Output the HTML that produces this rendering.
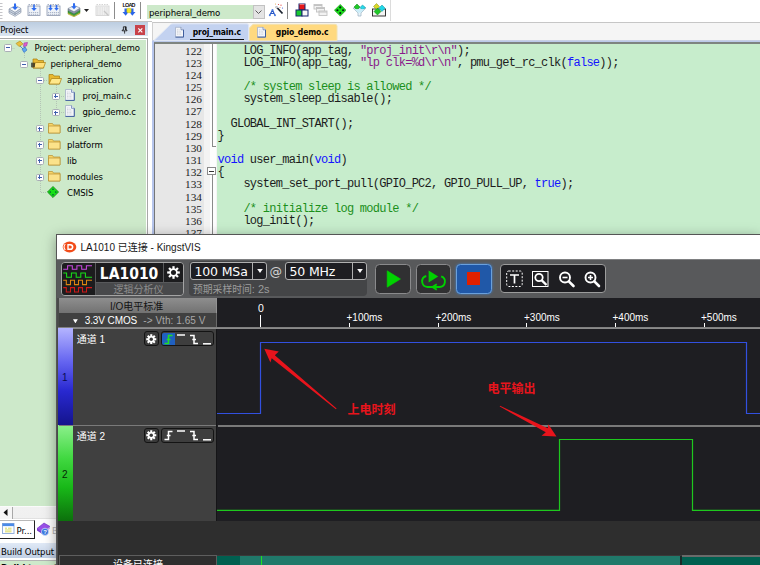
<!DOCTYPE html>
<html lang="zh">
<head>
<meta charset="utf-8">
<title>LA1010 - KingstVIS</title>
<style>
*{box-sizing:border-box;margin:0;padding:0}
html,body{width:760px;height:565px;overflow:hidden;background:#fff}
body{position:relative;font-family:"Liberation Sans","Noto Sans CJK SC",sans-serif;font-size:11px;color:#000}
.a{position:absolute}
.t{position:absolute;white-space:nowrap;line-height:1}
/* ---------- Keil ---------- */
#ktb{left:0;top:0;width:760px;height:22px;background:#fff}
#ktbline{left:0;top:21.200px;width:152px;height:.9px;background:#c2c2c2}
.sep{position:absolute;top:2px;width:1px;height:17px;background:#8c8c8c}
#phead{left:0;top:22px;width:147.700px;height:14.200px;background:linear-gradient(#bccde0,#dbe5f1)}
#tree{left:0;top:39.800px;width:145.800px;height:466px;background:#cde9ca}
.tr{position:absolute;white-space:nowrap;line-height:16px;height:16px;font-size:9.5px;letter-spacing:-.07px;color:#000;font-family:"DejaVu Sans Condensed","Liberation Sans",sans-serif}
.kt{font-family:"DejaVu Sans Condensed","Liberation Sans",sans-serif;font-size:9.5px;letter-spacing:-.07px}
.exp{position:absolute;width:7.8px;height:7.4px;border:1px solid #a9aeb6;background:#fdfdfd;border-radius:1.6px}
.exp:before{content:"";position:absolute;left:.9px;top:2.2px;width:4px;height:1px;background:#3f5fae}
.exp.p:after{content:"";position:absolute;left:2.4px;top:.7px;width:1px;height:4px;background:#3f5fae}
#edframe{left:151.700px;top:22px;width:609px;height:220px;background:#f5f5f5;border-left:1px solid #d0d0d0;border-top:1px solid #c6c6c6;margin-top:-.3px}
.tb{font-family:"DejaVu Sans Condensed","Liberation Sans",sans-serif;font-size:8.5px;letter-spacing:-.13px;font-weight:bold}
/* code */
.ln{position:absolute;left:155px;width:47px;text-align:right;font-family:"Liberation Serif",serif;font-size:11.300px;letter-spacing:0;line-height:12px;color:#222;white-space:pre}
.cd{position:absolute;left:217.5px;font-family:"Liberation Mono",monospace;font-size:12px;letter-spacing:-0.73px;line-height:12px;color:#1c1c1c;white-space:pre}
.k{color:#1414ff}.s{color:#8a1a8a}.c{color:#1b8f1b}
/* ---------- KingstVIS ---------- */
#kv{left:56px;top:234px;width:704px;height:331px;background:#2e2e2e;overflow:hidden;box-shadow:0 3px 12px rgba(0,0,0,.36);font-family:"Liberation Sans","Noto Sans CJK SC",sans-serif}
#kv .t{color:#fff}
.rl{font-size:10px;font-family:'Liberation Sans',sans-serif}
.tk{top:323px;width:1px;height:5px;background:#fff}
</style>
</head>
<body>
<!-- ================= Keil top toolbar ================= -->
<div class="a" id="ktb"></div>
<div class="a" id="ktbline"></div>
<div class="a" style="left:390px;top:0;width:1px;height:21px;background:#dcdcdc"></div>
<div class="sep" style="left:114px"></div>
<div class="sep" style="left:140px"></div>
<div class="sep" style="left:287px"></div>
<!-- toolbar grip -->
<svg class="a" style="left:0;top:2px" width="3" height="18" viewBox="0 0 3 18"><path d="M0 1.500H2.500M0 4.500H2.500M0 7.500H2.500M0 10.500H2.500M0 13.500H2.500M0 16.500H2.500" stroke="#c4c4c8" stroke-width="1"/></svg>
<!-- translate -->
<svg class="a" style="left:8px;top:3px" width="14" height="14" viewBox="0 0 14 14">
  <path d="M1 8 L7 11.500 L13 7.500 V9.500 L7 13.300 L1 10Z" fill="#dfe5ee" stroke="#8793a8" stroke-width=".7"/>
  <path d="M1 6 L7.500 2.500 L13 5.500 L7 9.500Z" fill="#f4f7fb" stroke="#8793a8" stroke-width=".7"/>
  <path d="M1 6 V8 L7 11.500 V9.500Z M7 9.500 V11.500 L13 7.500 V5.500Z" fill="#c9d2e0" stroke="#8793a8" stroke-width=".6"/>
  <path d="M6 0.500 H8 V4 H10 L7 7 L4 4 H6Z" fill="#2f6cf0"/>
</svg>
<!-- build -->
<svg class="a" style="left:27px;top:3px" width="14" height="14" viewBox="0 0 14 14">
  <rect x="1" y="3" width="12" height="9.500" fill="#eef2f8" stroke="#8a96ac" stroke-width=".8"/>
  <path d="M1.500 1.500 H12.500" stroke="#a8b2c4" stroke-width="1" stroke-dasharray="1.500 1"/>
  <path d="M2 9.500 H12 M2 11.300 H12" stroke="#9aa6bc" stroke-width=".8" stroke-dasharray="1.200 .8"/>
  <path d="M6.200 1.500 H7.800 V5 H9.800 L7 8 L4.200 5 H6.200Z" fill="#2f6cf0"/>
</svg>
<!-- rebuild -->
<svg class="a" style="left:46px;top:3px" width="15" height="14" viewBox="0 0 15 14">
  <rect x="1" y="3" width="13" height="9.500" fill="#eef2f8" stroke="#8a96ac" stroke-width=".8"/>
  <path d="M1.500 1.500 H13.500" stroke="#a8b2c4" stroke-width="1" stroke-dasharray="1.500 1"/>
  <path d="M2 9.500 H13 M2 11.300 H13" stroke="#9aa6bc" stroke-width=".8" stroke-dasharray="1.200 .8"/>
  <path d="M3.700 2 H5.300 V5 H6.800 L4.500 7.800 L2.200 5 H3.700Z" fill="#2f6cf0"/>
  <path d="M9.700 2 H11.300 V5 H12.800 L10.500 7.800 L8.200 5 H9.700Z" fill="#2f6cf0"/>
</svg>
<!-- batch build -->
<svg class="a" style="left:67px;top:3px" width="14" height="14" viewBox="0 0 14 14">
  <path d="M1 9.500 L7 12.800 L13 9 V10.500 L7 13.800 L1 11Z" fill="#d8d838" stroke="#8a8a20" stroke-width=".5"/>
  <path d="M1 7.500 L7 10.800 L13 7 V9 L7 12.500 L1 9.500Z" fill="#3ca83c" stroke="#1a6a1a" stroke-width=".5"/>
  <path d="M1 5.500 L7 8.800 L13 5 V7 L7 10.800 L1 7.500Z" fill="#8c98a8" stroke="#566072" stroke-width=".5"/>
  <path d="M1 5.500 L7.500 2.500 L13 5 L7 8.800Z" fill="#f0f3f8" stroke="#7c889c" stroke-width=".6"/>
  <path d="M6 0.300 H8 V3.300 H9.800 L7 6.200 L4.200 3.300 H6Z" fill="#2f6cf0"/>
</svg>
<svg class="a" style="left:84px;top:8.500px" width="5" height="3" viewBox="0 0 5 3"><path d="M0 0 H5 L2.500 3Z" fill="#222"/></svg>
<!-- disabled -->
<svg class="a" style="left:95px;top:3px" width="15" height="14" viewBox="0 0 15 14" opacity=".75">
  <rect x="1" y="3" width="13" height="9.500" fill="#f0f0f0" stroke="#c0c0c0" stroke-width=".8"/>
  <path d="M1.500 1.500 H13.500" stroke="#c8c8c8" stroke-width="1" stroke-dasharray="1.500 1"/>
  <path d="M2 5 H13 M2 7 H13 M2 9 H13 M2 11 H13" stroke="#c4c4c4" stroke-width=".9" stroke-dasharray="1.500 .8"/>
  <path d="M9 8 L13.500 12.500" stroke="#b4b4b4" stroke-width="1.200"/>
</svg>
<!-- LOAD -->
<svg class="a" style="left:121px;top:2px" width="16" height="16" viewBox="0 0 16 16">
  <text x="8" y="5.300" font-family="Liberation Sans, sans-serif" font-size="5.400" font-weight="bold" text-anchor="middle" fill="#111" textLength="13">LOAD</text>
  <path d="M3.500 6.500 H6 V10 H7.500 L4.700 13.800 L1.500 10 H3.500Z" fill="#2a64e8"/>
  <path d="M10 6.500 H12.500 V10 H14.500 L11.300 13.800 L8.500 10 H10Z" fill="#2a64e8"/>
  <rect x="5.800" y="6.300" width="4.400" height="4.400" rx="1.200" fill="#f0e828" stroke="#b8b010" stroke-width=".4"/>
</svg>
<!-- wand -->
<svg class="a" style="left:268px;top:3px" width="16" height="14" viewBox="0 0 16 14">
  <path d="M8 3.500 L14.500 10.500" stroke="#1c2430" stroke-width="1.800"/>
  <path d="M8 3.500 L9.500 5" stroke="#e8e8f0" stroke-width="1.400"/>
  <path d="M4.500 7 L1.500 12.500 M4.500 7 L7 12.500 M2.500 10.500 H6.500" stroke="#2858c8" stroke-width="1.100" fill="none"/>
  <circle cx="1.800" cy="12.300" r="1" fill="#5080e0"/><circle cx="7" cy="12.300" r="1" fill="#5080e0"/><circle cx="4.500" cy="7" r="1" fill="#5080e0"/>
  <circle cx="10.500" cy="1.500" r=".6" fill="#e04040"/><circle cx="13" cy="2.200" r=".6" fill="#e04040"/><circle cx="12" cy="4.500" r=".5" fill="#e08040"/><circle cx="14.500" cy="5" r=".6" fill="#4060e0"/><circle cx="7.500" cy="1" r=".5" fill="#e0a040"/>
</svg>
<!-- blocks -->
<svg class="a" style="left:295px;top:3px" width="14" height="14" viewBox="0 0 14 14">
  <rect x="4" y="1" width="6" height="6" fill="#e81818" stroke="#16246e" stroke-width="1"/>
  <rect x="1" y="7" width="6" height="6" fill="#18c830" stroke="#16246e" stroke-width="1"/>
  <rect x="7" y="7" width="6" height="6" fill="#f8f8f8" stroke="#16246e" stroke-width="1"/>
  <path d="M4.500 1.500 H9.500" stroke="#f88" stroke-width=".8"/>
</svg>
<!-- disabled windows -->
<svg class="a" style="left:313px;top:3px" width="15" height="14" viewBox="0 0 15 14" fill="#f2f2f2" stroke="#c2c2c2" stroke-width=".9">
  <rect x="1" y="1.500" width="8" height="4.500"/><rect x="3.500" y="4.500" width="8" height="4.500"/><rect x="6" y="8" width="8" height="4.500"/>
  <path d="M1 2.500 H9 M3.500 5.500 H11.500 M6 9 H14" stroke-width="1.200"/>
</svg>
<!-- green diamond -->
<svg class="a" style="left:333.500px;top:4px" width="12.500" height="12.500" viewBox="0 0 14 14"><path d="M7 0.500 L13.500 7 L7 13.500 L0.500 7Z" fill="#18e018" stroke="#0a8a0a" stroke-width=".7"/><circle cx="7" cy="3.800" r="1.250" fill="#021"/><circle cx="7" cy="10.200" r="1.250" fill="#021"/><circle cx="3.800" cy="7" r="1.250" fill="#021"/><circle cx="10.200" cy="7" r="1.250" fill="#021"/></svg>
<!-- funnel -->
<svg class="a" style="left:352px;top:3px" width="15" height="14" viewBox="0 0 15 14">
  <path d="M1 5 H14 L9 10 V13 H6 V10Z" fill="#e8f4fa" stroke="#9ab0c0" stroke-width=".7"/>
  <path d="M5 1 L8 4 L5 7 L2 4Z" fill="#20c828" stroke="#0a7a10" stroke-width=".5"/>
  <path d="M10.500 2 L13.500 4.500 L10.500 7 L8 4.500Z" fill="#28d8e8" stroke="#0a8a9a" stroke-width=".5"/>
  <path d="M2.500 6 H12.500 L8.800 9.800 H6.200Z" fill="#c8ecf8" opacity=".9"/>
</svg>
<!-- pack box -->
<svg class="a" style="left:371px;top:3px" width="16" height="14" viewBox="0 0 16 14">
  <rect x="1.500" y="6" width="13" height="7" fill="#f4f4f4" stroke="#222" stroke-width=".9"/>
  <path d="M5.500 0.500 L8.500 3.500 L5.500 6.500 L2.500 3.500Z" fill="#d8d828" stroke="#8a8a10" stroke-width=".5"/>
  <path d="M11 2 L14.200 5.200 L11 8.400 L7.800 5.200Z" fill="#20d8e8" stroke="#0a8a9a" stroke-width=".5"/>
  <path d="M6.500 5 L10 8.500 L6.500 12 L3 8.500Z" fill="#20c828" stroke="#0a7a10" stroke-width=".5"/>
</svg>

<!-- target combo -->
<div class="a" style="left:147px;top:5px;width:106px;height:14px;background:#cde9ca"></div>
<div class="t kt" style="left:149px;top:8.0px">peripheral_demo</div>
<div class="a" style="left:252.5px;top:5px;width:12px;height:14px;background:#e4e4e4;border:1px solid #c2c2c2"></div>
<svg class="a" style="left:254px;top:8px" width="9" height="8" viewBox="0 0 9 8"><path d="M1.5 2.5 L4.5 5.5 L7.5 2.5" fill="none" stroke="#5a5a5a" stroke-width="1"/></svg>

<!-- ================= Project panel ================= -->
<div class="a" id="phead"></div>
<div class="t kt" style="left:.3px;top:24.700px;letter-spacing:-.2px">Project</div>
<div class="a" style="left:135px;top:25px;width:10px;height:10px;background:#c8424a"></div>
<svg class="a" style="left:134.500px;top:24.500px" width="11" height="11" viewBox="0 0 11 11"><path d="M3.300 3.300 L7.300 7.300 M7.300 3.300 L3.300 7.300" stroke="#fff" stroke-width="1.150"/></svg>
<svg class="a" style="left:120.800px;top:26px" width="7.200" height="8" viewBox="0 0 9 10"><path d="M3 1 H6.5 V5 H7.5 V6 H1.5 V5 H3 Z M4.5 6 V9.5" fill="none" stroke="#111" stroke-width="1"/><path d="M5.5 1 V5" stroke="#111" stroke-width="1.2"/></svg>
<div class="a" style="left:-1px;top:38.100px;width:148.700px;height:530px;background:#fff;border:.95px solid #a8a8a8"></div>
<div class="a" id="tree"></div>


<!-- tree rows inserted here -->
<!-- dotted connector lines -->
<svg class="a" style="left:0;top:39px" width="147" height="170" viewBox="0 0 147 170">
  <g stroke="#b4c4b6" stroke-width="1" stroke-dasharray="1 1" fill="none">
    <path d="M10.5 9.5 H15"/><path d="M24.5 14 V20"/><path d="M40.500 30 V153.5 H47"/>
    <path d="M56.5 46 V73.5 M61 57.500 H64 M61 73.500 H64 M44 41.5 H47"/>
  </g>
</svg>
<!-- row 1 -->
<div class="exp" style="left:3.9px;top:44.3px"></div>
<svg class="a" style="left:15px;top:40.0px" width="14" height="14" viewBox="0 0 14 14"><path d="M1 3.5 L5 1 L8 4 L4 6.500Z" fill="#e8c040" stroke="#b08a18" stroke-width=".6"/><path d="M9 3 L12.500 2.500 L11.500 6 L8.500 6.500Z" fill="#e060d0" stroke="#a030a0" stroke-width=".6"/><path d="M7 9 L10 7 L12 10 L9 12.500Z" fill="#60a8f0" stroke="#2868c0" stroke-width=".6"/><path d="M5 6 L8 9 M10 6.500 L9.500 8" stroke="#4878c8" stroke-width=".9" fill="none"/></svg>
<div class="tr" style="left:34.500px;top:39.8px">Project: peripheral_demo</div>
<!-- row 2 -->
<div class="exp" style="left:19.9px;top:60.5px"></div>
<svg class="a" style="left:30px;top:56.1px" width="16" height="15" viewBox="0 0 16 15"><path d="M3 3 H7 L8 4.500 H13.500 V12 H3Z" fill="#e8b830" stroke="#a87c10" stroke-width=".7"/><path d="M3 12 L5.500 6.500 H15.500 L13.500 12Z" fill="#ffe07a" stroke="#a87c10" stroke-width=".7"/><path d="M1 8 H5 M1 10 H5 M2 6.500 V11.500 M4 6.500 V11.500" stroke="#222" stroke-width=".9"/></svg>
<div class="tr" style="left:50.500px;top:55.9px">peripheral_demo</div>
<!-- row 3 -->
<div class="exp" style="left:35.9px;top:76.6px"></div>
<svg class="a" style="left:48px;top:72.3px" width="15" height="15" viewBox="0 0 15 15"><path d="M1 2.500 H5 L6 4 H11.500 V12 H1Z" fill="#e8b830" stroke="#a87c10" stroke-width=".7"/><path d="M1 12 L3.500 6.500 H13.500 L11.500 12Z" fill="#ffe88a" stroke="#a87c10" stroke-width=".7"/></svg>
<div class="tr" style="left:67px;top:72.1px">application</div>
<!-- row 4,5 -->
<div class="exp p" style="left:51.9px;top:92.7px"></div>
<svg class="a" style="left:65.300px;top:88.800px" width="10" height="12" viewBox="0 0 10 12"><path d="M0.500 0.500 H6.500 L9.300 3.300 V11.500 H0.500Z" fill="#f3f5f9" stroke="#a4b0c8" stroke-width=".8"/><path d="M0.500 11.400 H9.300 V3.300" fill="none" stroke="#3f5e9e" stroke-width="1"/><path d="M6.500 0.500 V3.300 H9.300" fill="#e8edf6" stroke="#5a76ae" stroke-width=".7"/><path d="M2 3H5M2 4.500H6M2 6H7M2 7.500H7M2 9H7" stroke="#cfd3da" stroke-width=".9" stroke-dasharray="1 .6"/></svg>
<div class="tr" style="left:82.500px;top:88.2px">proj_main.c</div>
<div class="exp p" style="left:51.9px;top:108.9px"></div>
<svg class="a" style="left:65.300px;top:104.950px" width="10" height="12" viewBox="0 0 10 12"><path d="M0.500 0.500 H6.500 L9.300 3.300 V11.500 H0.500Z" fill="#f3f5f9" stroke="#a4b0c8" stroke-width=".8"/><path d="M0.500 11.400 H9.300 V3.300" fill="none" stroke="#3f5e9e" stroke-width="1"/><path d="M6.500 0.500 V3.300 H9.300" fill="#e8edf6" stroke="#5a76ae" stroke-width=".7"/><path d="M2 3H5M2 4.500H6M2 6H7M2 7.500H7M2 9H7" stroke="#cfd3da" stroke-width=".9" stroke-dasharray="1 .6"/></svg>
<div class="tr" style="left:82.500px;top:104.4px">gpio_demo.c</div>
<!-- folders -->
<div class="exp p" style="left:35.9px;top:125.0px"></div>
<svg class="a fo" style="left:48px;top:121.8px" width="13" height="13" viewBox="0 0 13 13"><path d="M0.500 1.500 H4.500 L5.500 3 H12 V11 H0.500Z" fill="#f7d66a" stroke="#b89030" stroke-width=".7"/><path d="M0.500 4 H12 V11 H0.500Z" fill="#fbe28a" stroke="#b89030" stroke-width=".7"/></svg>
<div class="tr" style="left:67px;top:120.5px">driver</div>
<div class="exp p" style="left:35.9px;top:141.2px"></div>
<svg class="a fo" style="left:48px;top:137.9px" width="13" height="13" viewBox="0 0 13 13"><path d="M0.500 1.500 H4.500 L5.500 3 H12 V11 H0.500Z" fill="#f7d66a" stroke="#b89030" stroke-width=".7"/><path d="M0.500 4 H12 V11 H0.500Z" fill="#fbe28a" stroke="#b89030" stroke-width=".7"/></svg>
<div class="tr" style="left:67px;top:136.7px">platform</div>
<div class="exp p" style="left:35.9px;top:157.3px"></div>
<svg class="a fo" style="left:48px;top:154.1px" width="13" height="13" viewBox="0 0 13 13"><path d="M0.500 1.500 H4.500 L5.500 3 H12 V11 H0.500Z" fill="#f7d66a" stroke="#b89030" stroke-width=".7"/><path d="M0.500 4 H12 V11 H0.500Z" fill="#fbe28a" stroke="#b89030" stroke-width=".7"/></svg>
<div class="tr" style="left:67px;top:152.8px">lib</div>
<div class="exp p" style="left:35.9px;top:173.5px"></div>
<svg class="a fo" style="left:48px;top:170.2px" width="13" height="13" viewBox="0 0 13 13"><path d="M0.500 1.500 H4.500 L5.500 3 H12 V11 H0.500Z" fill="#f7d66a" stroke="#b89030" stroke-width=".7"/><path d="M0.500 4 H12 V11 H0.500Z" fill="#fbe28a" stroke="#b89030" stroke-width=".7"/></svg>
<div class="tr" style="left:67px;top:169.0px">modules</div>
<svg class="a" style="left:47.300px;top:186.200px" width="12" height="12" viewBox="0 0 14 14"><path d="M7 0.500 L13.500 7 L7 13.500 L0.500 7Z" fill="#18e018" stroke="#0a700a" stroke-width=".8"/><circle cx="7" cy="3.800" r="1" fill="#063"/><circle cx="7" cy="10.200" r="1" fill="#063"/><circle cx="3.800" cy="7" r="1" fill="#063"/><circle cx="10.200" cy="7" r="1" fill="#063"/></svg>
<div class="tr" style="left:67px;top:185.1px">CMSIS</div>


<!-- bottom-left: scrollbar, tabs, build output -->
<div class="a" style="left:0;top:505.500px;width:147px;height:14px;background:linear-gradient(#fff 0,#f1f1f1 1.500px,#f0f0f0 12px,#c4c4c4 13.500px)"></div>
<div class="a" style="left:0;top:506.500px;width:12.500px;height:12px;background:#f6f6f6;border-right:1px solid #a8a8a8"></div>
<svg class="a" style="left:3px;top:509px" width="5" height="7" viewBox="0 0 5 7"><path d="M4.5 0 V7 L0.5 3.5Z" fill="#111"/></svg>
<div class="a" style="left:0;top:519px;width:147px;height:24px;background:#fff"></div>
<div class="a" style="left:-1px;top:520px;width:35.500px;height:18.800px;background:#fff;border:1px solid #b8b8b8;border-right-color:#222;border-bottom-color:#222"></div>
<svg class="a" style="left:2px;top:523px" width="13" height="11" viewBox="0 0 13 11"><rect x=".500" y=".500" width="11.500" height="10" fill="#fbfdff" stroke="#8aa8d8" stroke-width=".9"/><rect x=".500" y=".500" width="11.500" height="2.600" fill="#4a8ae8"/><path d="M3 5.200 H5 M3 7 H9.500 M3 8.800 H9.500 M6 5.200 H9.500" stroke="#d4d438" stroke-width=".8"/></svg>
<div class="t kt" style="left:16.500px;top:525.500px">Pr...</div>
<svg class="a" style="left:36px;top:522px" width="15" height="15" viewBox="0 0 15 15"><path d="M1 6.500 L8 1 L14 4.500 L7 10.500Z" fill="#9a50e8" stroke="#6a28c0" stroke-width=".6"/><path d="M1 6.500 L7 10.500 V12.500 L1 8.500Z" fill="#7a38d0"/><path d="M7 10.500 L14 4.500 V6.500 L7 12.500Z" fill="#c8a8f0"/><circle cx="9" cy="9.800" r="3.600" fill="#3a78e0" stroke="#dce8ff" stroke-width=".7"/><text x="9" y="12" font-family="Liberation Sans, sans-serif" font-size="6" font-weight="bold" fill="#fff" text-anchor="middle">?</text></svg>
<div class="t kt" style="left:52px;top:525.500px;color:#b0b0b0">B</div>
<div class="a" style="left:0;top:543px;width:147px;height:15.600px;background:linear-gradient(#e0e9f6,#bfcee4)"></div>
<div class="t kt" style="left:1px;top:546.500px">Build Output</div>
<div class="a" style="left:0;top:558px;width:147px;height:3px;background:#fff"></div>
<div class="a" style="left:0;top:559.700px;width:147px;height:.9px;background:#b4b4b4"></div>
<div class="a" style="left:0;top:560.600px;width:147px;height:5px;background:#cde9ca"></div>
<div class="t kt" style="left:1px;top:563px;font-weight:bold">Build target 'peripheral_demo'</div>

<!-- ================= Editor ================= -->
<div class="a" id="edframe"></div>
<!-- tab strip -->
<div class="a" style="left:151.800px;top:40px;width:609px;height:2.600px;background:linear-gradient(#dcdcdc 0,#bccaea .8px)"></div>
<svg class="a" style="left:152px;top:22px" width="200" height="19" viewBox="0 0 200 19">
  <path d="M2 18.5 L18.5 2.5 Q19.5 1.8 21 1.8 H95 Q96.5 1.8 96.5 3.3 V18.5 Z" fill="#c3d2f0" stroke="#dfe6f5" stroke-width="1"/>
  <path d="M97.5 18.5 V6 L101 2.3 H183 Q185 2.3 185 4.3 V18.5 Z" fill="#ffd97f" stroke="#f3e2b0" stroke-width="1"/>
  <!-- file icons -->
  <g transform="translate(23,4.800)"><path d="M0.500 0.500 H6 L8.500 3 V10.300 H0.500Z" fill="#f3f5f9" stroke="#a4b0c8" stroke-width=".8"/><path d="M0.500 10.300 H8.500 V3" fill="none" stroke="#3f5e9e" stroke-width="1"/><path d="M6 0.500 V3 H8.500" fill="#e8edf6" stroke="#5a76ae" stroke-width=".7"/><path d="M2 3H4.500M2 4.500H6M2 6H6.500M2 7.500H6.500" stroke="#cfd3da" stroke-width=".9" stroke-dasharray="1 .6"/></g>
  <g transform="translate(105,4.800)"><path d="M0.500 0.500 H6 L8.500 3 V10.300 H0.500Z" fill="#f3f5f9" stroke="#a4b0c8" stroke-width=".8"/><path d="M0.500 10.300 H8.500 V3" fill="none" stroke="#3f5e9e" stroke-width="1"/><path d="M6 0.500 V3 H8.500" fill="#e8edf6" stroke="#5a76ae" stroke-width=".7"/><path d="M2 3H4.500M2 4.500H6M2 6H6.500M2 7.500H6.500" stroke="#cfd3da" stroke-width=".9" stroke-dasharray="1 .6"/></g>
</svg>
<div class="t tb" style="left:192.700px;top:28px">proj_main.c</div>
<div class="a" style="left:189.600px;top:38.700px;width:54.400px;height:1.300px;background:#111"></div>
<div class="t tb" style="left:275.800px;top:28px">gpio_demo.c</div>
<!-- editor body -->
<div class="a" style="left:151.800px;top:41px;width:2.600px;height:200px;background:#b6c5ec"></div>
<div class="a" style="left:154.400px;top:42.200px;width:606px;height:1.700px;background:#7e8480"></div>
<div class="a" style="left:154.400px;top:43px;width:1px;height:200px;background:#747678"></div>
<div class="a" style="left:155.400px;top:43.900px;width:49px;height:200px;background:#e7e7e7"></div>
<div class="a" style="left:204.400px;top:43.900px;width:12.100px;height:200px;background:linear-gradient(90deg,#f3f3f3 6.500px,#fdfdfd 6.500px)"></div>
<div class="a" style="left:216.500px;top:43.900px;width:544px;height:200px;background:#c7edcc"></div>
<!-- fold lines -->
<div class="a" style="left:211.500px;top:44px;width:1px;height:102px;background:#8a8a8a"></div>
<div class="a" style="left:211.500px;top:146px;width:4.500px;height:1px;background:#8a8a8a"></div>
<div class="a" style="left:211.500px;top:175px;width:1px;height:60px;background:#8a8a8a"></div>
<div class="a" style="left:207.400px;top:166.800px;width:8.600px;height:8.600px;background:#fff;border:1px solid #8a8a8a"></div>
<div class="a" style="left:209.400px;top:170.600px;width:4.600px;height:1px;background:#333"></div>
<div class="ln" style="top:44.7px">122</div>
<div class="cd" style="top:44.7px">    LOG_INFO(app_tag, <span class="s">"proj_init\r\n"</span>);</div>
<div class="ln" style="top:56.8px">123</div>
<div class="cd" style="top:56.8px">    LOG_INFO(app_tag, <span class="s">"lp clk=%d\r\n"</span>, pmu_get_rc_clk(<span class="k">false</span>));</div>
<div class="ln" style="top:69.0px">124</div>
<div class="ln" style="top:81.1px">125</div>
<div class="cd" style="top:81.1px">    <span class="c">/* system sleep is allowed */</span></div>
<div class="ln" style="top:93.3px">126</div>
<div class="cd" style="top:93.3px">    system_sleep_disable();</div>
<div class="ln" style="top:105.4px">127</div>
<div class="ln" style="top:117.6px">128</div>
<div class="cd" style="top:117.6px">  GLOBAL_INT_START();</div>
<div class="ln" style="top:129.7px">129</div>
<div class="cd" style="top:129.7px">}</div>
<div class="ln" style="top:141.9px">130</div>
<div class="ln" style="top:154.1px">131</div>
<div class="cd" style="top:154.1px"><span class="k">void</span> user_main(<span class="k">void</span>)</div>
<div class="ln" style="top:166.2px">132</div>
<div class="cd" style="top:166.2px">{</div>
<div class="ln" style="top:178.3px">133</div>
<div class="cd" style="top:178.3px">    system_set_port_pull(GPIO_PC2, GPIO_PULL_UP, <span class="k">true</span>);</div>
<div class="ln" style="top:190.5px">134</div>
<div class="ln" style="top:202.7px">135</div>
<div class="cd" style="top:202.7px">    <span class="c">/* initialize log module */</span></div>
<div class="ln" style="top:214.8px">136</div>
<div class="cd" style="top:214.8px">    log_init();</div>
<div class="ln" style="top:227.0px">137</div>


<!-- ================= KingstVIS window ================= -->
<div class="a" id="kv">
<div class="a" style="left:-56px;top:-234px;width:760px;height:565px">
<!-- frame + title -->
<div class="a" style="left:56px;top:234px;width:704px;height:331px;background:#555"></div>
<div class="a" style="left:57px;top:235px;width:703px;height:25px;background:#fff"></div>
<svg class="a" style="left:62px;top:240.500px" width="15" height="12" viewBox="0 0 15 12">
  <ellipse cx="7.500" cy="6" rx="6.800" ry="5.400" fill="#f24c1a"/>
  <path d="M3.300 3 A4.600 4.600 0 0 0 3.300 9" fill="none" stroke="#fff" stroke-width="1.100"/>
  <path d="M5.300 2.900 H8.300 A3.100 3.100 0 0 1 8.300 9.100 H5.300Z" fill="#fff"/>
  <path d="M6.700 4.400 H8.200 A1.600 1.600 0 0 1 8.200 7.600 H6.700Z" fill="#f24c1a"/>
</svg>
<div class="t" style="left:80.500px;top:242.500px;font-size:10px"><span style="color:#181818">LA1010 已连接 - KingstVIS</span></div>
<!-- toolbar -->
<div class="a" style="left:57px;top:259px;width:703px;height:39px;background:linear-gradient(#9a9b9c 0,#58595b 1.2px)"></div>
<!-- logo group -->
<div class="a" style="left:61px;top:262px;width:123px;height:34px;border:1px solid #a4a4a4;border-radius:4px;background:#58595b"></div>
<div class="a" style="left:62px;top:263px;width:32.500px;height:32px;background:#1c1c1e;border-radius:3px 0 0 3px"></div>
<svg class="a" style="left:62px;top:263px" width="33" height="32" viewBox="62 263 33 32" fill="none" stroke-width="1.050">
  <path d="M63.200 269.300 H67.600 V265.800 H72.300 V269.300 H76.900 V265.800 H81.700 V269.300 H86.400 V265.800 H92" stroke="#c848e0"/>
  <path d="M63.200 273 H66.600 V277.300 H71.400 V273 H76.200 V277.300 H80.800 V273 H85.400 V277.300 H92" stroke="#18e018"/>
  <path d="M63.200 280.300 H66.300 V284.600 H70.500 V280.300 H74.500 V284.600 H78.500 V280.300 H82.500 V284.600 H86.500 V280.300 H92" stroke="#dc8410"/>
  <path d="M63.200 287.600 H66.300 V291.900 H70.500 V287.600 H74.500 V291.900 H78.500 V287.600 H82.500 V291.900 H86.500 V287.600 H92" stroke="#d01818"/>
</svg>
<div class="a" style="left:95.500px;top:263px;width:67px;height:18.500px;background:#1c1c1e"></div>
<div class="t" style="left:99.800px;top:267.200px;font-size:15.500px;font-weight:bold;font-family:'DejaVu Sans Condensed','Liberation Sans',sans-serif;letter-spacing:0px">LA1010</div>
<div class="a" style="left:163.500px;top:263px;width:19.500px;height:18.500px;background:#1c1c1e;border-radius:0 3px 0 0"></div>
<svg class="a gear" style="left:166.500px;top:266.300px" width="13" height="13" viewBox="-7 -7 14 14"><g fill="#fff"><circle r="4.500"/><rect x="-1.200" y="-6.800" width="2.400" height="13.600"/><rect x="-1.200" y="-6.800" width="2.400" height="13.600" transform="rotate(45)"/><rect x="-1.200" y="-6.800" width="2.400" height="13.600" transform="rotate(90)"/><rect x="-1.200" y="-6.800" width="2.400" height="13.600" transform="rotate(135)"/></g><circle r="2.700" fill="#1c1c1e"/></svg>
<div class="a" style="left:95.500px;top:282.500px;width:87.500px;height:12.500px;background:#48494b;border-radius:0 0 3px 0"></div>
<div class="t" style="left:113.500px;top:284.900px;font-size:10px"><span style="color:#8e8e8e">逻辑分析仪</span></div>
<!-- sample panel -->
<div class="a" style="left:188.500px;top:261px;width:178.500px;height:35px;background:#444547;border-radius:4px"></div>
<div class="a" style="left:190px;top:262px;width:76.500px;height:17.500px;background:#1e1e22;border:1px solid #b0b0b0;border-radius:3px"></div>
<div class="a" style="left:252px;top:263px;width:1px;height:15.500px;background:#b0b0b0"></div>
<svg class="a" style="left:256.500px;top:269px" width="6" height="4" viewBox="0 0 7 5"><path d="M0 0 H7 L3.500 5Z" fill="#fff"/></svg>
<div class="t" style="left:194.500px;top:266.200px;font-size:12.500px;font-family:'DejaVu Sans',sans-serif;letter-spacing:-.15px">100 MSa</div>
<div class="t" style="left:269.500px;top:266px;font-size:12.500px;font-family:'DejaVu Sans',sans-serif"><span style="color:#d4d4d4">@</span></div>
<div class="a" style="left:284.500px;top:262px;width:82px;height:17.500px;background:#1e1e22;border:1px solid #b0b0b0;border-radius:3px"></div>
<div class="a" style="left:352px;top:263px;width:1px;height:15.500px;background:#b0b0b0"></div>
<svg class="a" style="left:356.500px;top:269px" width="6" height="4" viewBox="0 0 7 5"><path d="M0 0 H7 L3.500 5Z" fill="#fff"/></svg>
<div class="t" style="left:289.500px;top:266.200px;font-size:12.500px;font-family:'DejaVu Sans',sans-serif;letter-spacing:-.15px">50 MHz</div>
<div class="t" style="left:193px;top:284px;font-size:9.800px"><span style="color:#9c9c9c">预期采样时间<span style="font-size:11px">: 2s</span></span></div>
<!-- buttons -->
<div class="a" style="left:375px;top:264px;width:36px;height:30px;background:#303032;border:1.300px solid #8a8a8c;border-radius:4.500px"></div>
<svg class="a" style="left:386px;top:270px" width="16" height="18" viewBox="0 0 16 18"><path d="M1.200 0.800 L14.500 9 L1.200 17.200Z" fill="#00d200" stroke="#00d200" stroke-width=".6" stroke-linejoin="round"/></svg>
<div class="a" style="left:415.500px;top:264px;width:35.500px;height:30px;background:#303032;border:1.300px solid #8a8a8c;border-radius:4.500px"></div>
<svg class="a" style="left:420px;top:268px" width="27" height="23" viewBox="420 268 27 23" fill="none"><path d="M428.600 270.400 L438.200 276.400 L428.600 282.500Z" fill="#00d200"/><path d="M426.300 276 A5.600 5.600 0 0 0 427.500 287 H439.500 A5.500 5.500 0 0 0 441.200 276.300" stroke="#00d200" stroke-width="1.900"/><path d="M436.800 284.200 L432.500 287 L436.800 289.800" stroke="#00d200" stroke-width="1.900"/></svg>
<div class="a" style="left:456px;top:264px;width:36px;height:30px;background:#2058a8;border:1.300px solid #6aa0dc;border-radius:4.500px;box-shadow:0 0 2.500px #3c80d0"></div>
<div class="a" style="left:467.200px;top:272.200px;width:13.100px;height:13px;background:#e02000"></div>
<!-- zoom group -->
<div class="a" style="left:500.200px;top:264.200px;width:105.600px;height:29.300px;background:#1e1e22;border:1.200px solid #9c9c9c;border-radius:4px"></div>
<svg class="a" style="left:504.600px;top:269px" width="98" height="20" viewBox="0 0 98 20" fill="none" stroke="#fff">
  <rect x="1.700" y="2" width="15.500" height="15.500" rx="2" stroke-width="1" stroke-dasharray="2 1.500"/>
  <path d="M5 6 H14 M9.500 6 V14.500" stroke-width="1.700"/>
  <rect x="27.500" y="2.500" width="15.500" height="15" stroke-width="1"/>
  <circle cx="34" cy="8.500" r="3.700" stroke-width="1.800"/><path d="M36.800 11.300 L41.500 16" stroke-width="2.400"/>
  <circle cx="60" cy="8.500" r="5" stroke-width="1.900"/><path d="M63.800 12.300 L68.500 17" stroke-width="2.600" stroke-linecap="round"/><path d="M57.500 8.500 H62.500" stroke-width="1.600"/>
  <circle cx="85.500" cy="8.500" r="5" stroke-width="1.900"/><path d="M89.300 12.300 L94 17" stroke-width="2.600" stroke-linecap="round"/><path d="M83 8.500 H88 M85.500 6 V11" stroke-width="1.600"/>
</svg>
<!-- header left -->
<div class="a" style="left:57px;top:297.500px;width:703px;height:268px;background:#1e1e22"></div>
<div class="a" style="left:57px;top:297.500px;width:2px;height:268px;background:#4a4a4a"></div>
<div class="a" style="left:58.500px;top:298px;width:158px;height:14.500px;background:linear-gradient(#8e8e8e,#727272)"></div>
<div class="t" style="left:110px;top:301.700px;font-size:10px"><span style="color:#141414">I/O电平标准</span></div>
<div class="a" style="left:58.500px;top:312.500px;width:158px;height:15px;background:#404040"></div>
<svg class="a" style="left:73.200px;top:318.500px" width="4.800" height="4.600" viewBox="0 0 7 6"><path d="M0 0 H7 L3.500 6Z" fill="#fff"/></svg>
<div class="t" style="left:84.700px;top:316px;font-size:10px;letter-spacing:-.1px">3.3V CMOS</div>
<div class="t" style="left:143.300px;top:316px;font-size:10px;letter-spacing:.05px"><span style="color:#a8a8a8">-&gt; Vth: 1.65 V</span></div>
<!-- ruler -->
<div class="t rl" style="left:258px;top:302.500px;font-size:10.500px">0</div>
<div class="t rl" style="left:346.500px;top:312.800px">+100ms</div>
<div class="t rl" style="left:435.500px;top:312.800px">+200ms</div>
<div class="t rl" style="left:524px;top:312.800px">+300ms</div>
<div class="t rl" style="left:612.500px;top:312.800px">+400ms</div>
<div class="t rl" style="left:701px;top:312.800px">+500ms</div>
<div class="a" style="left:260px;top:315px;width:1px;height:13px;background:#fff"></div>
<div class="a tk" style="left:349px"></div><div class="a tk" style="left:438px"></div><div class="a tk" style="left:526px"></div><div class="a tk" style="left:615px"></div><div class="a tk" style="left:704px"></div>
<!-- separators -->
<div class="a" style="left:58.300px;top:326.700px;width:702px;height:2px;background:linear-gradient(#7c7c7c,#909090)"></div>
<!-- channel 1 -->
<div class="a" style="left:58.300px;top:327.700px;width:14.600px;height:97px;background:linear-gradient(#b4b4ff 0%,#6464f0 35%,#2828d0 65%,#14148c 100%)"></div>
<div class="a" style="left:72.900px;top:328.700px;width:143.500px;height:96px;background:#404040"></div>
<div class="t" style="left:76.800px;top:334.500px;font-size:10px">通道 1</div>
<div class="t" style="left:62px;top:373px;font-size:10px"><span style="color:#0a0a50">1</span></div>
<!-- channel 2 -->
<div class="a" style="left:58.300px;top:425px;width:14.600px;height:96px;background:linear-gradient(#8cf08c 0%,#40d840 35%,#18b818 65%,#0c700c 100%)"></div>
<div class="a" style="left:72.900px;top:426px;width:143.500px;height:95px;background:#404040"></div>
<div class="a" style="left:58.500px;top:424.500px;width:158px;height:1.500px;background:#7a7a7a"></div>
<div class="t" style="left:76.800px;top:432px;font-size:10px">通道 2</div>
<div class="t" style="left:62px;top:469.700px;font-size:10px"><span style="color:#062806">2</span></div>
<div class="a" style="left:215.700px;top:298px;width:1px;height:15px;background:#929292"></div><div class="a" style="left:215.700px;top:313px;width:1px;height:14px;background:#6a6a6a"></div><div class="a" style="left:216.100px;top:329px;width:1px;height:192.500px;background:#151517"></div>
<div class="a" style="left:217.500px;top:424.500px;width:543px;height:2.500px;background:linear-gradient(#5a5a5a,#9a9a9a 50%,#5a5a5a)"></div>
<!-- channel buttons -->
<div class="a" style="left:144px;top:331.100px;width:14.500px;height:15px;border:1.200px solid #141414;border-radius:3px;background:#3a3a3a"></div>
<svg class="a" style="left:146px;top:333.5px" width="10.500" height="10.500" viewBox="-7 -7 14 14"><g fill="#fff"><circle r="4.400"/><rect x="-1.400" y="-6.700" width="2.800" height="13.400"/><rect x="-1.400" y="-6.700" width="2.800" height="13.400" transform="rotate(45)"/><rect x="-1.400" y="-6.700" width="2.800" height="13.400" transform="rotate(90)"/><rect x="-1.400" y="-6.700" width="2.800" height="13.400" transform="rotate(135)"/></g><circle r="2.300" fill="#3a3a3a"/></svg>
<div class="a" style="left:161px;top:331.100px;width:53px;height:15px;border:1.200px solid #141414;border-radius:3px;background:#3e3e3e"></div>
<div class="a" style="left:162px;top:332.5px;width:12.500px;height:12.500px;background:#2060c0;border-radius:2px 0 0 2px"></div>
<svg class="a" style="left:161px;top:331.5px" width="53" height="14.500" viewBox="0 0 53 14.500" fill="none" stroke="#fff" stroke-width="1.500"><path d="M3.500 11.500 H7.500 V3.500 H11.500 M5.800 7.500 H9.500" stroke="#20e020"/><path d="M16 3 H24"/><path d="M29 3.500 H33 V11.500 H37 M31.300 7.500 H35"/><path d="M42 11.800 H50"/></svg>
<div class="a" style="left:144px;top:427.800px;width:14.500px;height:15px;border:1.200px solid #141414;border-radius:3px;background:#3a3a3a"></div>
<svg class="a" style="left:146px;top:430px" width="10.500" height="10.500" viewBox="-7 -7 14 14"><g fill="#fff"><circle r="4.400"/><rect x="-1.400" y="-6.700" width="2.800" height="13.400"/><rect x="-1.400" y="-6.700" width="2.800" height="13.400" transform="rotate(45)"/><rect x="-1.400" y="-6.700" width="2.800" height="13.400" transform="rotate(90)"/><rect x="-1.400" y="-6.700" width="2.800" height="13.400" transform="rotate(135)"/></g><circle r="2.300" fill="#3a3a3a"/></svg>
<div class="a" style="left:161px;top:427.800px;width:53px;height:15px;border:1.200px solid #141414;border-radius:3px;background:#3e3e3e"></div>
<svg class="a" style="left:161px;top:428px" width="53" height="14.500" viewBox="0 0 53 14.500" fill="none" stroke="#fff" stroke-width="1.500"><path d="M3.500 11.500 H7.500 V3.500 H11.500 M5.800 7.500 H9.500" stroke="#fff"/><path d="M16 3 H24"/><path d="M29 3.500 H33 V11.500 H37 M31.300 7.500 H35"/><path d="M42 11.800 H50"/></svg>
<!-- waveforms + annotations -->
<svg class="a" style="left:217px;top:329px" width="543" height="193" viewBox="217 329 543 193" fill="none">
  <path d="M217 413.500 H260.500 V342.500 H746.500 V413.500 H760" stroke="#3250e0" stroke-width="1.200"/>
  <path d="M217 510.300 H559.500 V439.500 H692.500 V510.300 H760" stroke="#1ec81e" stroke-width="1.200"/>
  <path d="M264.300 348.800 L278.800 351.600 L274.800 355.300 L336.600 408.600 L335.900 409.200 L271.700 358.300 L270.400 362.600 Z" fill="#e8141c"/>
  <path d="M556.500 436.400 L541.500 435.700 L545.800 432.300 L499.700 406.500 L500.100 405.800 L547.800 428.300 L548.300 424.300 Z" fill="#e8141c"/>
</svg>
<div class="t" style="left:347.500px;top:403.500px;font-size:12px;font-weight:bold"><span style="color:#e8141c">上电时刻</span></div>
<div class="t" style="left:487.600px;top:383px;font-size:12px;font-weight:bold"><span style="color:#e8141c">电平输出</span></div>
<!-- bottom -->
<div class="a" style="left:58.300px;top:521px;width:702px;height:44px;background:#2e2e2e"></div>
<div class="a" style="left:58.500px;top:555px;width:158.500px;height:12px;border:1px solid #5e5e5e;background:#2e2e2e"></div>
<div class="t" style="left:113px;top:560.300px;font-size:10px">设备已连接</div>
<div class="a" style="left:217px;top:555px;width:543px;height:1.500px;background:#3a3a3a"></div>
<div class="a" style="left:217px;top:556px;width:23px;height:10px;background:#006050"></div>
<div class="a" style="left:240px;top:556px;width:440px;height:10px;background:#20796a"></div>
<div class="a" style="left:261px;top:556px;width:1px;height:10px;background:#20e020"></div>
<div class="a" style="left:680px;top:555.500px;width:1.500px;height:10px;background:#1a2a28"></div>
<div class="a" style="left:681.500px;top:556.500px;width:79px;height:10px;background:#006050"></div>
<div class="a" style="left:681.500px;top:555px;width:79px;height:1.500px;background:#6a6a6a"></div>
</div>

</div>
</body>
</html>
